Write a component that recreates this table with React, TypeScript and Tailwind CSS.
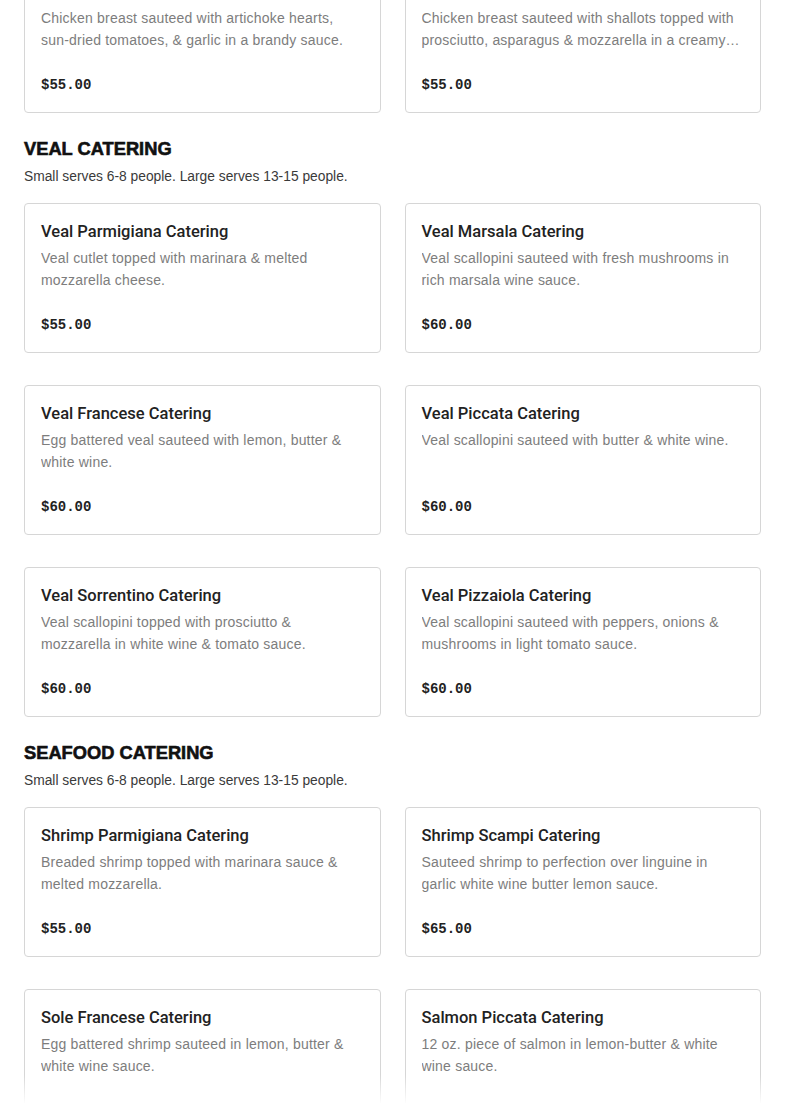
import React from "react";

type Item = { name: string; desc: string; price: string };
type Section = { title?: string; note?: string; items: Item[] };

const NOTE = "Small serves 6-8 people. Large serves 13-15 people.";

const sections: Section[] = [
  {
    items: [
      {
        name: "Chicken Toscana Catering",
        desc: "Chicken breast sauteed with artichoke hearts, sun-dried tomatoes, & garlic in a brandy sauce.",
        price: "$55.00",
      },
      {
        name: "Chicken Sorrentino Catering",
        desc: "Chicken breast sauteed with shallots topped with prosciutto, asparagus & mozzarella in a creamy brandy sauce.",
        price: "$55.00",
      },
    ],
  },
  {
    title: "Veal Catering",
    note: NOTE,
    items: [
      { name: "Veal Parmigiana Catering", desc: "Veal cutlet topped with marinara & melted mozzarella cheese.", price: "$55.00" },
      { name: "Veal Marsala Catering", desc: "Veal scallopini sauteed with fresh mushrooms in rich marsala wine sauce.", price: "$60.00" },
      { name: "Veal Francese Catering", desc: "Egg battered veal sauteed with lemon, butter & white wine.", price: "$60.00" },
      { name: "Veal Piccata Catering", desc: "Veal scallopini sauteed with butter & white wine.", price: "$60.00" },
      { name: "Veal Sorrentino Catering", desc: "Veal scallopini topped with prosciutto & mozzarella in white wine & tomato sauce.", price: "$60.00" },
      { name: "Veal Pizzaiola Catering", desc: "Veal scallopini sauteed with peppers, onions & mushrooms in light tomato sauce.", price: "$60.00" },
    ],
  },
  {
    title: "Seafood Catering",
    note: NOTE,
    items: [
      { name: "Shrimp Parmigiana Catering", desc: "Breaded shrimp topped with marinara sauce & melted mozzarella.", price: "$55.00" },
      { name: "Shrimp Scampi Catering", desc: "Sauteed shrimp to perfection over linguine in garlic white wine butter lemon sauce.", price: "$65.00" },
      { name: "Sole Francese Catering", desc: "Egg battered shrimp sauteed in lemon, butter & white wine sauce.", price: "$60.00" },
      { name: "Salmon Piccata Catering", desc: "12 oz. piece of salmon in lemon-butter & white wine sauce.", price: "$60.00" },
    ],
  },
];

function MenuCard({ item }: { item: Item }) {
  return (
    <div className="h-[150px] flex flex-col border border-[#d6d6d6] rounded-[4px] bg-white px-4 py-4">
      <h3 className="text-[16.5px] leading-6 font-medium text-[#222] font-['Roboto',sans-serif]">{item.name}</h3>
      <p className="mt-[3px] h-[44px] text-[14px] leading-[22px] tracking-[0.2px] text-[#7d7d7d] line-clamp-2 font-['Liberation_Sans',sans-serif]">
        {item.desc}
      </p>
      <div className="mt-auto text-[14px] leading-[22px] font-bold text-[#222] font-['Liberation_Mono',monospace]">
        {item.price}
      </div>
    </div>
  );
}

export default function App() {
  return (
    <div className="relative h-[1103px] overflow-hidden bg-white px-6 font-['Liberation_Sans',sans-serif]">
      <div className="-mt-[37px] flex flex-col">
        {sections.map((s, i) => (
          <section key={i} className={i > 0 ? "mt-[24px]" : ""}>
            {s.title && (
              <>
                <h2 className="text-[18.3px] leading-6 font-extrabold uppercase text-[#111] [-webkit-text-stroke:0.6px_#111]">
                  {s.title}
                </h2>
                <p className="mt-[6px] mb-[16px] text-[13.8px] leading-5 text-[#3a3a3a]">{s.note}</p>
              </>
            )}
            <div className="grid grid-cols-2 gap-x-6 gap-y-8">
              {s.items.map((it) => (
                <MenuCard key={it.name} item={it} />
              ))}
            </div>
          </section>
        ))}
      </div>
      {/* fade at the bottom edge */}
      <div className="pointer-events-none absolute bottom-0 left-0 right-0 h-[28px] bg-gradient-to-b from-white/0 to-white/95" />
    </div>
  );
}
